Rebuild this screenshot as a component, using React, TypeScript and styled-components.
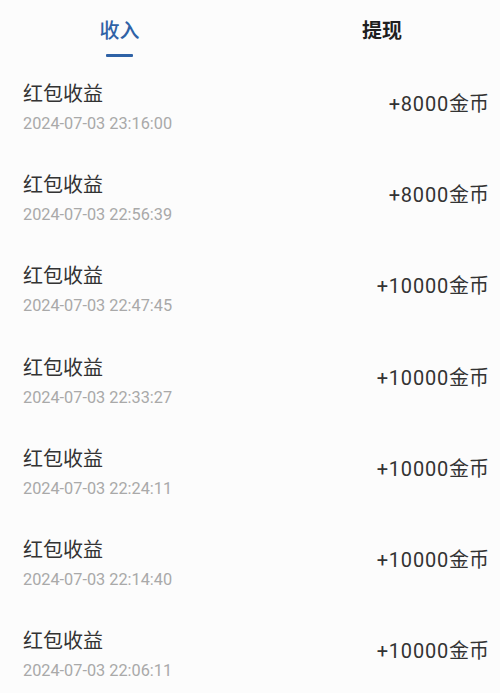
import React from 'react';
import styled, { createGlobalStyle } from 'styled-components';

const GlobalStyle = createGlobalStyle`
  html, body {
    margin: 0;
    padding: 0;
    background: #fcfcfc;
  }
  body {
    font-family: Roboto, 'Noto Sans CJK SC', 'Noto Sans', sans-serif;
    -webkit-font-smoothing: antialiased;
  }
`;

type Record = { title: string; time: string; amount: number };

const records: Record[] = [
  { title: '红包收益', time: '2024-07-03 23:16:00', amount: 8000 },
  { title: '红包收益', time: '2024-07-03 22:56:39', amount: 8000 },
  { title: '红包收益', time: '2024-07-03 22:47:45', amount: 10000 },
  { title: '红包收益', time: '2024-07-03 22:33:27', amount: 10000 },
  { title: '红包收益', time: '2024-07-03 22:24:11', amount: 10000 },
  { title: '红包收益', time: '2024-07-03 22:14:40', amount: 10000 },
  { title: '红包收益', time: '2024-07-03 22:06:11', amount: 10000 },
];

const Page = styled.div`
  width: 500px;
  height: 693px;
  overflow: hidden;
  background: #fcfcfc;
`;

const TabBar = styled.div`
  display: grid;
  grid-template-columns: 239px 1fr;
  column-gap: 25px;
  height: 66px;
`;

const Tab = styled.div<{ $active?: boolean }>`
  display: flex;
  flex-direction: column;
  align-items: center;
  padding-top: 16px;
  font-family: 'Noto Sans CJK SC', sans-serif;
  font-size: 20px;
  line-height: 28px;
  font-weight: ${(p) => (p.$active ? 500 : 600)};
  color: ${(p) => (p.$active ? '#2f62a6' : '#1f1f1f')};

  &::after {
    content: '';
    display: ${(p) => (p.$active ? 'block' : 'none')};
    width: 27px;
    height: 3px;
    margin-top: 10px;
    border-radius: 1px;
    background: #2f62a6;
  }
`;

const List = styled.div`
  display: flex;
  flex-direction: column;
`;

const Row = styled.div`
  height: 91.2px;
  box-sizing: border-box;
  padding: 13px 11px 0 23px;
  display: flex;
  justify-content: space-between;
  align-items: flex-start;
`;

const Info = styled.div`
  display: flex;
  flex-direction: column;
`;

const Title = styled.div`
  font-family: 'Noto Sans CJK SC', sans-serif;
  font-size: 20px;
  line-height: 28px;
  color: #333;
`;

const Time = styled.div`
  margin-top: 6px;
  font-family: Roboto, sans-serif;
  font-size: 16.3px;
  line-height: 22px;
  color: #a9a9a9;
`;

const Amount = styled.div`
  margin-top: 10px;
  font-size: 20px;
  line-height: 28px;
  color: #333;
  letter-spacing: 0.8px;

  span {
    font-family: 'Noto Sans CJK SC', sans-serif;
    letter-spacing: 0;
  }
`;

export default function App() {
  return (
    <Page>
      <GlobalStyle />
      <TabBar>
        <Tab $active>收入</Tab>
        <Tab>提现</Tab>
      </TabBar>
      <List>
        {records.map((r, i) => (
          <Row key={i}>
            <Info>
              <Title>{r.title}</Title>
              <Time>{r.time}</Time>
            </Info>
            <Amount>
              +{r.amount}
              <span>金币</span>
            </Amount>
          </Row>
        ))}
      </List>
    </Page>
  );
}
